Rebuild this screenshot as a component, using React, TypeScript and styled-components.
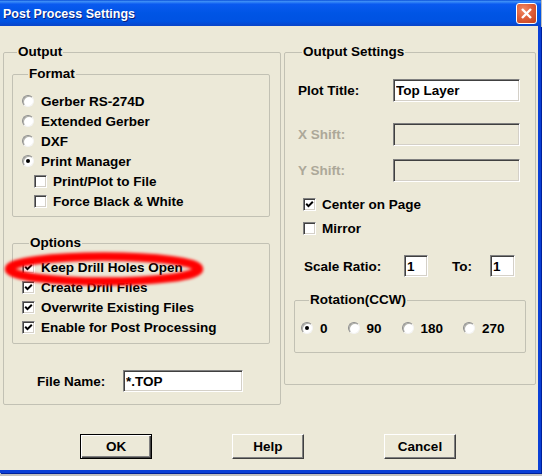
import React from "react";
import styled, { createGlobalStyle } from "styled-components";

const GlobalStyle = createGlobalStyle`
  html, body {
    margin: 0;
    padding: 0;
    background: #bfbfbf;
  }
  body {
    width: 542px;
    height: 476px;
    overflow: hidden;
    font-family: "Liberation Sans", Arial, sans-serif;
  }
`;

const App = () => {
  return (
    <>
      <GlobalStyle />
      <Window>
        <TitleBar>
          <Title>Post Process Settings</Title>
          <CloseButton>
            <svg width="13" height="13" viewBox="0 0 13 13">
              <path d="M2 2 L11 11 M11 2 L2 11" stroke="#fff" strokeWidth="2.4" />
            </svg>
          </CloseButton>
        </TitleBar>
        <Frame>
          <Client>
            <Columns>
              <GroupBox $w={278} $pad="0 10px 12px 8px">
                <Legend $ml={5}>Output</Legend>
                <GroupBox $w={258} $mt={6} $pad="9px 0 5px 9px">
                  <Legend $ml={6}>Format</Legend>
                  <Radio label="Gerber RS-274D" />
                  <Radio label="Extended Gerber" />
                  <Radio label="DXF" />
                  <Radio label="Print Manager" on />
                  <Check label="Print/Plot to File" indent={12} />
                  <Check label="Force Black & White" indent={12} />
                </GroupBox>
                <GroupBox $w={258} $mt={18} $pad="6px 0 6px 9px">
                  <Legend $ml={7}>Options</Legend>
                  <Check label="Keep Drill Holes Open" on />
                  <Check label="Create Drill Files" on />
                  <Check label="Overwrite Existing Files" on />
                  <Check label="Enable for Post Processing" on />
                </GroupBox>
                <FileRow>
                  <FieldLabel $w={86}>File Name:</FieldLabel>
                  <TextBox $w={120} $h={22} defaultValue="*.TOP" />
                </FileRow>
              </GroupBox>

              <GroupBox $w={252} $pad="0 0 31px 9px">
                <Legend $ml={8}>Output Settings</Legend>
                <FieldRow $mt={19}>
                  <FieldLabel>Plot Title:</FieldLabel>
                  <TextBox $w={127} $h={23} defaultValue="Top Layer" />
                </FieldRow>
                <FieldRow $mt={21}>
                  <FieldLabel $disabled>X Shift:</FieldLabel>
                  <TextBox $w={127} $h={23} $disabled disabled />
                </FieldRow>
                <FieldRow $mt={13}>
                  <FieldLabel $disabled>Y Shift:</FieldLabel>
                  <TextBox $w={127} $h={23} $disabled disabled />
                </FieldRow>
                <CheckList>
                  <Check label="Center on Page" on />
                  <Check label="Mirror" />
                </CheckList>
                <ScaleRow>
                  <FieldLabel $w={100}>Scale Ratio:</FieldLabel>
                  <TextBox $w={24} $h={22} defaultValue="1" />
                  <FieldLabel $w={38} $ml={24}>To:</FieldLabel>
                  <TextBox $w={25} $h={22} defaultValue="1" />
                </ScaleRow>
                <GroupBox $w={232} $mt={15} $pad="10px 0 14px 6px">
                  <Legend $ml={8}>Rotation(CCW)</Legend>
                  <RadioLine>
                    <Radio label="0" on />
                    <Radio label="90" />
                    <Radio label="180" />
                    <Radio label="270" />
                  </RadioLine>
                </GroupBox>
              </GroupBox>
            </Columns>

            <ButtonRow>
              <Button $default>OK</Button>
              <Button>Help</Button>
              <Button>Cancel</Button>
            </ButtonRow>
          </Client>
        </Frame>

        {/* red marker ring drawn over the first option */}
        <Marker width="541" height="473">
          <defs>
            <filter id="soft" x="-10%" y="-50%" width="120%" height="200%">
              <feGaussianBlur stdDeviation="1.8" />
            </filter>
          </defs>
          <ellipse
            cx="104"
            cy="269"
            rx="95"
            ry="12.5"
            fill="none"
            stroke="#ff0000"
            strokeWidth="8.5"
            filter="url(#soft)"
          />
        </Marker>
      </Window>
    </>
  );
};

const Radio = ({ label, on }: { label: string; on?: boolean }) => (
  <OptionRow $gap={7}>
    <RadioCircle $on={on} />
    <OptionText>{label}</OptionText>
  </OptionRow>
);

const Check = ({
  label,
  on,
  indent,
}: {
  label: string;
  on?: boolean;
  indent?: number;
}) => (
  <OptionRow $gap={6} $indent={indent}>
    <CheckBox>
      {on ? (
        <svg width="9" height="9" viewBox="0 0 9 9">
          <path d="M1.2 3.8 L3.5 6.1 L7.8 1.8" stroke="#000" strokeWidth="2" fill="none" />
        </svg>
      ) : null}
    </CheckBox>
    <OptionText>{label}</OptionText>
  </OptionRow>
);

export default App;

const Window = styled.div`
  position: relative;
  width: 541px;
  height: 473px;
  display: flex;
  flex-direction: column;
`;

const TitleBar = styled.div`
  height: 26px;
  flex: none;
  display: flex;
  align-items: center;
  justify-content: space-between;
  padding: 0 4px 0 3px;
  box-sizing: border-box;
  background: linear-gradient(
    180deg,
    #0a4fd8 0%,
    #3d8ef7 6%,
    #0a5af0 16%,
    #0055e5 50%,
    #0052e2 82%,
    #0a44c8 100%
  );
`;

const Title = styled.div`
  color: #ffffff;
  font: bold 12.5px "Liberation Sans", Arial, sans-serif;
  text-shadow: 1px 1px 0 #0b1f7a;
  margin-top: 1px;
`;

const CloseButton = styled.div`
  width: 21px;
  height: 21px;
  box-sizing: border-box;
  border: 1px solid #ffffff;
  border-radius: 3px;
  background: radial-gradient(circle at 35% 30%, #f08a66 0%, #e0603a 45%, #c2401c 100%);
  display: flex;
  align-items: center;
  justify-content: center;
  margin-top: 1px;
`;

const Frame = styled.div`
  flex: 1;
  display: flex;
  border-right: 3px solid #0a3fd6;
  border-bottom: 3px solid #0a3fd6;
  box-shadow: 1px 1px 0 #00219a;
`;

const Client = styled.div`
  flex: 1;
  background: #ece9d8;
  padding: 18px 0 0 3px;
  display: flex;
  flex-direction: column;
`;

const Columns = styled.div`
  display: flex;
  align-items: flex-start;
  gap: 3px;
`;

const GroupBox = styled.fieldset<{ $w: number; $mt?: number; $pad: string }>`
  margin: ${(p) => p.$mt || 0}px 0 0 0;
  padding: ${(p) => p.$pad};
  min-width: 0;
  width: ${(p) => p.$w}px;
  box-sizing: border-box;
  border: 1px solid #c2c1b4;
  border-radius: 2px;
`;

const Legend = styled.legend<{ $ml: number }>`
  margin-left: ${(p) => p.$ml}px;
  padding: 0 1px;
  font: bold 13.5px "Liberation Sans", Arial, sans-serif;
  line-height: 16px;
  color: #000;
`;

const OptionRow = styled.div<{ $gap: number; $indent?: number }>`
  height: 20px;
  display: flex;
  align-items: center;
  gap: ${(p) => p.$gap}px;
  padding-left: ${(p) => p.$indent || 0}px;
`;

const OptionText = styled.span`
  font: bold 13.5px "Liberation Sans", Arial, sans-serif;
  color: #000;
  white-space: nowrap;
`;

const RadioCircle = styled.span<{ $on?: boolean }>`
  width: 12px;
  height: 12px;
  flex: none;
  box-sizing: border-box;
  border-radius: 50%;
  background: #ffffff;
  border: 1px solid;
  border-color: #8c8c8c #f4f4f4 #f4f4f4 #8c8c8c;
  box-shadow: inset 1px 1px 0 #b0b0a8;
  display: flex;
  align-items: center;
  justify-content: center;
  &::after {
    content: "";
    width: 4px;
    height: 4px;
    border-radius: 50%;
    background: ${(p) => (p.$on ? "#000" : "transparent")};
  }
`;

const CheckBox = styled.span`
  width: 13px;
  height: 13px;
  flex: none;
  box-sizing: border-box;
  background: #ffffff;
  border: 1px solid;
  border-color: #808080 #ffffff #ffffff #808080;
  box-shadow: inset 1px 1px 0 #404040, inset -1px -1px 0 #d4d0c8;
  display: flex;
  align-items: center;
  justify-content: center;
`;

const FieldLabel = styled.span<{ $disabled?: boolean; $w?: number; $ml?: number }>`
  width: ${(p) => p.$w || 95}px;
  margin-left: ${(p) => p.$ml || 0}px;
  flex: none;
  font: bold 13.5px "Liberation Sans", Arial, sans-serif;
  color: ${(p) => (p.$disabled ? "#aca899" : "#000")};
  white-space: nowrap;
`;

const TextBox = styled.input<{ $w: number; $h: number; $disabled?: boolean }>`
  width: ${(p) => p.$w}px;
  height: ${(p) => p.$h}px;
  box-sizing: border-box;
  margin: 0;
  padding: 0 2px;
  font: bold 13.5px "Liberation Sans", Arial, sans-serif;
  color: #000;
  background: ${(p) => (p.$disabled ? "#ece9d8" : "#ffffff")};
  border: 1px solid;
  border-color: #808080 #ffffff #ffffff #808080;
  box-shadow: inset 1px 1px 0 #404040, inset -1px -1px 0 #d4d0c8;
  outline: none;
`;

const FileRow = styled.div`
  display: flex;
  align-items: center;
  margin-top: 26px;
  padding-left: 25px;
`;

const FieldRow = styled.div<{ $mt: number }>`
  display: flex;
  align-items: center;
  margin-top: ${(p) => p.$mt}px;
  padding-left: 4px;
`;

const CheckList = styled.div`
  display: flex;
  flex-direction: column;
  gap: 4px;
  margin-top: 12px;
  padding-left: 9px;
`;

const ScaleRow = styled.div`
  display: flex;
  align-items: center;
  margin-top: 17px;
  padding-left: 10px;
`;

const RadioLine = styled.div`
  display: flex;
  gap: 20px;
`;

const ButtonRow = styled.div`
  display: flex;
  gap: 80px;
  margin: 29px 0 0 77px;
`;

const Button = styled.button<{ $default?: boolean }>`
  width: 72px;
  height: 25px;
  box-sizing: border-box;
  padding: 0;
  font: bold 13.5px "Liberation Sans", Arial, sans-serif;
  color: #000;
  background: #ece9d8;
  border: 1px solid;
  border-color: ${(p) => (p.$default ? "#000" : "#ffffff #404040 #404040 #ffffff")};
  box-shadow: ${(p) =>
    p.$default
      ? "inset 1px 1px 0 #ffffff, inset -1px -1px 0 #404040, inset -2px -2px 0 #808080"
      : "inset -1px -1px 0 #808080"};
`;

const Marker = styled.svg`
  position: absolute;
  left: 0;
  top: 0;
  pointer-events: none;
`;
